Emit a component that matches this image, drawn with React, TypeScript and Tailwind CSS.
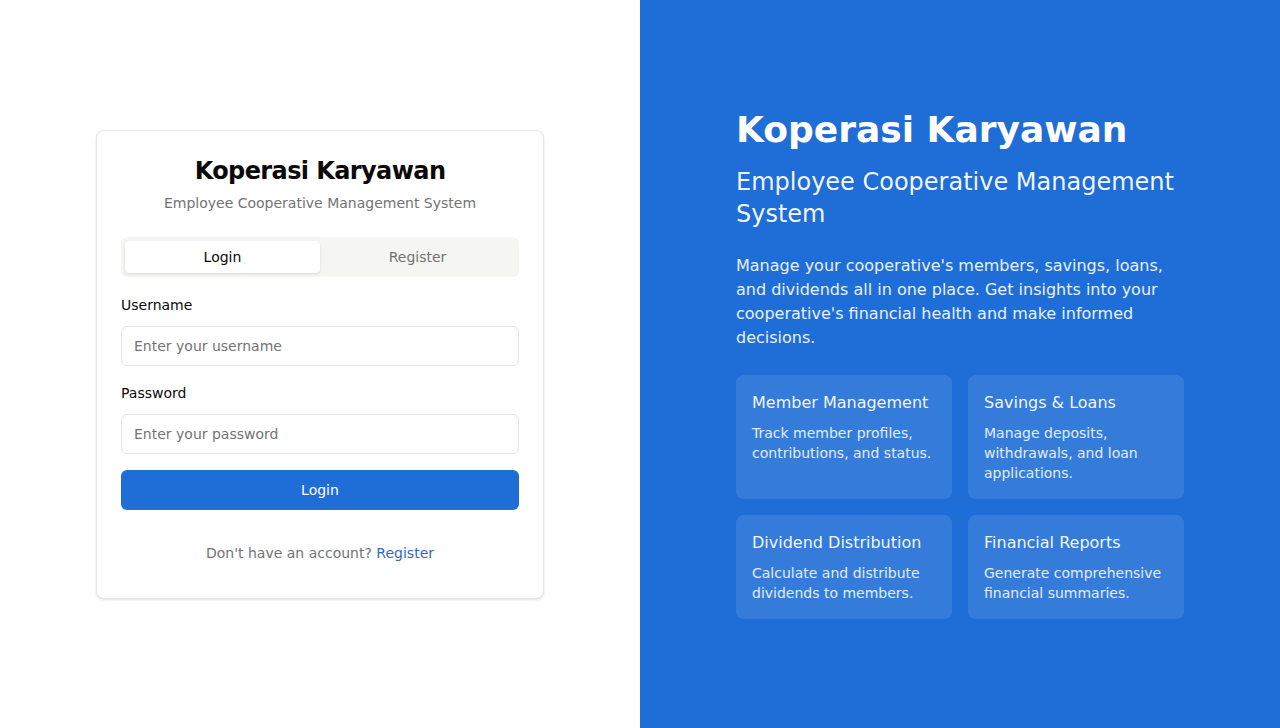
import { useState } from "react";

const features = [
    { title: "Member Management", desc: "Track member profiles, contributions, and status." },
    { title: "Savings & Loans", desc: "Manage deposits, withdrawals, and loan applications." },
    { title: "Dividend Distribution", desc: "Calculate and distribute dividends to members." },
    { title: "Financial Reports", desc: "Generate comprehensive financial summaries." },
];

const App = () => {
    const [tab, setTab] = useState<"login" | "register">("login");

    return (
        <div className="flex h-screen w-full font-['DejaVu_Sans',sans-serif] text-[#0a0a0a]">
            {/* left: auth card */}
            <div className="flex w-1/2 items-center justify-center bg-white">
                <div className="w-[448px] rounded-lg border border-[#e7e7e7] bg-white shadow-sm">
                    <div className="flex flex-col items-center gap-1.5 p-6">
                        <h1 className="text-2xl leading-8 font-bold tracking-tight">Koperasi Karyawan</h1>
                        <p className="text-sm leading-5 text-[#737373]">Employee Cooperative Management System</p>
                    </div>
                    <div className="px-6 pb-[35px]">
                        <div className="grid h-10 grid-cols-2 rounded-md bg-[#f5f5f4] p-1 text-sm">
                            <button
                                onClick={() => setTab("login")}
                                className={`rounded-sm ${tab === "login" ? "bg-white text-[#0a0a0a] shadow-sm" : "text-[#737373]"}`}
                            >
                                Login
                            </button>
                            <button
                                onClick={() => setTab("register")}
                                className={`rounded-sm ${tab === "register" ? "bg-white text-[#0a0a0a] shadow-sm" : "text-[#737373]"}`}
                            >
                                Register
                            </button>
                        </div>

                        <form className="mt-[18px]" onSubmit={(e) => e.preventDefault()}>
                            <label className="block text-sm leading-5">Username</label>
                            <input
                                placeholder="Enter your username"
                                className="mt-[11px] block h-10 w-full rounded-md border border-[#e7e7e7] px-3 text-sm outline-none placeholder:text-[#737373]"
                            />
                            <label className="mt-[17px] block text-sm leading-5">Password</label>
                            <input
                                type="password"
                                placeholder="Enter your password"
                                className="mt-[11px] block h-10 w-full rounded-md border border-[#e7e7e7] px-3 text-sm outline-none placeholder:text-[#737373]"
                            />
                            <button className="mt-4 h-10 w-full rounded-md bg-[#1f6dd6] text-sm text-white">Login</button>
                        </form>

                        <p className="mt-[33px] text-center text-sm leading-5 text-[#737373]">
                            Don't have an account? <a className="text-[#2b6bc2]">Register</a>
                        </p>
                    </div>
                </div>
            </div>

            {/* right: intro panel */}
            <div className="flex w-1/2 items-center bg-[#1f6dd6] px-24 text-white">
                <div className="w-full">
                    <h2 className="text-4xl leading-10 font-bold">Koperasi Karyawan</h2>
                    <p className="mt-4 text-2xl leading-8 text-white/95">Employee Cooperative Management System</p>
                    <p className="mt-6 text-base leading-6 text-white/90">
                        Manage your cooperative's members, savings, loans, and dividends all in one place. Get insights into your
                        cooperative's financial health and make informed decisions.
                    </p>
                    <div className="mt-[25px] grid grid-cols-2 gap-4">
                        {features.map((f) => (
                            <div key={f.title} className="rounded-lg bg-white/10 p-4">
                                <h3 className="text-base leading-6 text-white/95">{f.title}</h3>
                                <p className="mt-2 text-sm leading-5 text-white/85">{f.desc}</p>
                            </div>
                        ))}
                    </div>
                </div>
            </div>
        </div>
    );
};

export default App;
